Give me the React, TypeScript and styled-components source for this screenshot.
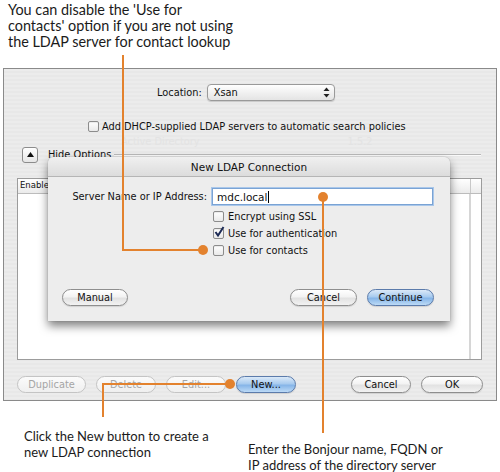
import styled, {createGlobalStyle, css} from 'styled-components';

const GlobalStyle = createGlobalStyle`
   html, body {
      margin: 0;
      padding: 0;
      background: #ffffff;
   }
`;

const ORANGE = '#e3822e';
const UI_FONT = `'DejaVu Sans', 'Liberation Sans', sans-serif`;

export default function App() {
   return (
      <>
         <GlobalStyle />
         <Page>
            <TopCaption>
               You can disable the 'Use for
               <br />
               contacts' option if you are not using
               <br />
               the LDAP server for contact lookup
            </TopCaption>

            <Window>
               <LocationRow>
                  <span>Location:</span>
                  <PopUp>
                     <span>Xsan</span>
                     <PopArrows>
                        <svg width='7' height='11' viewBox='0 0 7 11'>
                           <path d='M3.5 0.5 L6.5 4 L0.5 4 Z' fill='#222' />
                           <path d='M3.5 10.5 L6.5 7 L0.5 7 Z' fill='#222' />
                        </svg>
                     </PopArrows>
                  </PopUp>
               </LocationRow>

               <DhcpRow>
                  <CheckBox />
                  <span>Add DHCP-supplied LDAP servers to automatic search policies</span>
               </DhcpRow>

               <GhostRow>
                  <span>Active Directory</span>
                  <span>1.5.2</span>
               </GhostRow>

               <HideRow>
                  <Disclosure>
                     <svg width='7' height='5' viewBox='0 0 7 5'>
                        <path d='M3.5 0 L7 5 L0 5 Z' fill='#111' />
                     </svg>
                  </Disclosure>
                  <span>Hide Options</span>
                  <Separator />
               </HideRow>

               <Table>
                  <TableHead>
                     <HeadCell>Enable</HeadCell>
                     <HeadCell $grow />
                     <HeadCell $w={10} />
                  </TableHead>
                  <TableBody>
                     <BodyCol />
                     <BodyCol $w={10} />
                  </TableBody>
               </Table>

               <ButtonRow>
                  <PillButton $w={69} $disabled>Duplicate</PillButton>
                  <PillButton $w={60} $disabled>Delete</PillButton>
                  <PillButton $w={60} $disabled>Edit...</PillButton>
                  <PillButton $w={60} $blue>New...</PillButton>
                  <Spacer />
                  <PillButton $w={60}>Cancel</PillButton>
                  <PillButton $w={62}>OK</PillButton>
               </ButtonRow>

               <Sheet>
                  <SheetTitle>New LDAP Connection</SheetTitle>
                  <SheetBody>
                     <FieldRow>
                        <FieldLabel>Server Name or IP Address:</FieldLabel>
                        <TextField>
                           mdc.local
                           <Caret />
                        </TextField>
                     </FieldRow>
                     <Options>
                        <OptionRow>
                           <CheckBox />
                           <span>Encrypt using SSL</span>
                        </OptionRow>
                        <OptionRow>
                           <CheckBox $checked>
                              <svg width='12' height='12' viewBox='0 0 12 12'>
                                 <path
                                    d='M2.5 6 L5 9.5 L10.5 1'
                                    fill='none'
                                    stroke='#1c2a55'
                                    strokeWidth='2'
                                 />
                              </svg>
                           </CheckBox>
                           <span>Use for authentication</span>
                        </OptionRow>
                        <OptionRow>
                           <CheckBox />
                           <span>Use for contacts</span>
                        </OptionRow>
                     </Options>
                     <SheetButtons>
                        <PillButton $w={66}>Manual</PillButton>
                        <Spacer />
                        <PillButton $w={67}>Cancel</PillButton>
                        <PillButton $w={67} $blue>
                           Continue
                        </PillButton>
                     </SheetButtons>
                  </SheetBody>
               </Sheet>
            </Window>

            <BottomCaptions>
               <Caption $left={24}>
                  Click the New button to create a
                  <br />
                  new LDAP connection
               </Caption>
               <Caption $left={248} $top={13}>
                  Enter the Bonjour name, FQDN or
                  <br />
                  IP address of the directory server
               </Caption>
            </BottomCaptions>

            {/* callout lines */}
            <Callouts width='500' height='472' viewBox='0 0 500 472'>
               <g stroke={ORANGE} strokeWidth='2' fill='none'>
                  <path d='M123 55 V250 H203' />
                  <path d='M323 197 V433' />
                  <path d='M230 384 H103 V417' />
               </g>
               <g fill={ORANGE}>
                  <circle cx='203' cy='250' r='5' />
                  <circle cx='323' cy='197' r='5' />
                  <circle cx='230' cy='384' r='5' />
               </g>
            </Callouts>
         </Page>
      </>
   );
}

const Page = styled.div`
   position: relative;
   width: 500px;
   height: 472px;
   overflow: hidden;
   background: #ffffff;
`;

const TopCaption = styled.div`
   padding: 2px 0 0 8px;
   height: 48px;
   font-family: Lato, 'Open Sans', sans-serif;
   font-size: 14.4px;
   line-height: 16px;
   color: #1b1b1b;
`;

const Window = styled.div`
   position: relative;
   box-sizing: border-box;
   margin: 18px 0 0 3px;
   width: 494px;
   height: 333px;
   border: 1px solid #8a8a8a;
   background: repeating-linear-gradient(#ececec 0 2px, #e8e8e8 2px 4px);
   display: flex;
   flex-direction: column;
   font-family: ${UI_FONT};
   font-size: 9.8px;
   color: #111;
`;

const LocationRow = styled.div`
   display: flex;
   align-items: center;
   gap: 5px;
   margin: 15px 0 0 153px;
   height: 17px;
`;

const PopUp = styled.div`
   box-sizing: border-box;
   width: 128px;
   height: 17px;
   display: flex;
   align-items: center;
   justify-content: space-between;
   padding: 0 0 0 6px;
   border: 1px solid #9a9a9a;
   border-radius: 4px;
   background: linear-gradient(#ffffff, #f1f1f1 50%, #e4e4e4);
   box-shadow: 0 1px 1px rgba(0, 0, 0, 0.15);
`;

const PopArrows = styled.div`
   display: flex;
   align-items: center;
   justify-content: center;
   width: 14px;
   height: 100%;
`;

const DhcpRow = styled.div`
   display: flex;
   align-items: center;
   gap: 3px;
   margin: 19px 0 0 84px;
   height: 12px;
`;

const CheckBox = styled.div<{$checked?: boolean}>`
   position: relative;
   box-sizing: border-box;
   width: 11px;
   height: 11px;
   flex: none;
   border: 1px solid #8c8c8c;
   border-radius: 2px;
   background: linear-gradient(#ffffff, #e9e9e9);
   box-shadow: inset 0 1px 1px rgba(0, 0, 0, 0.08);

   svg {
      position: absolute;
      left: -1px;
      top: -3px;
   }
`;

const GhostRow = styled.div`
   display: flex;
   gap: 148px;
   margin: 4px 0 0 117px;
   height: 11px;
   color: #e3e3e3;
`;

const HideRow = styled.div`
   display: flex;
   align-items: center;
   margin: -1px 0 0 18px;
   height: 17px;
`;

const Disclosure = styled.div`
   box-sizing: border-box;
   width: 16px;
   height: 16px;
   margin-right: 10px;
   display: flex;
   align-items: center;
   justify-content: center;
   border: 1px solid #8c8c8c;
   border-radius: 3px;
   background: linear-gradient(#ffffff, #e6e6e6);
`;

const Separator = styled.div`
   flex: none;
   width: 367px;
   height: 1px;
   margin-left: 3px;
   background: #b9b9b9;
   border-bottom: 1px solid #fafafa;
`;

const Table = styled.div`
   box-sizing: border-box;
   margin: 15px 0 0 13px;
   width: 465px;
   height: 182px;
   border: 1px solid #9c9c9c;
   background: #ffffff;
   display: flex;
   flex-direction: column;
`;

const TableHead = styled.div`
   display: flex;
   height: 14px;
   border-bottom: 1px solid #bcbcbc;
   background: linear-gradient(#ffffff, #ebebeb);
`;

const HeadCell = styled.div<{$grow?: boolean; $w?: number}>`
   box-sizing: border-box;
   padding: 1px 0 0 2px;
   font-size: 8.5px;
   border-right: 1px solid #c8c8c8;
   ${({$grow, $w}) =>
      $grow
         ? css`flex: 1;`
         : $w
         ? css`width: ${$w}px; border-right: none;`
         : css`width: 38px;`}
`;

const TableBody = styled.div`
   flex: 1;
   display: flex;
   justify-content: flex-end;
`;

const BodyCol = styled.div<{$w?: number}>`
   width: ${({$w}) => $w ?? 0}px;
   border-left: 1px solid #d6d6d6;
`;

const ButtonRow = styled.div`
   display: flex;
   align-items: center;
   gap: 10px;
   margin: 16px 0 0 13px;
   width: 466px;
`;

const Spacer = styled.div`
   flex: 1;
`;

const PillButton = styled.div<{$w: number; $blue?: boolean; $disabled?: boolean}>`
   box-sizing: border-box;
   width: ${({$w}) => $w}px;
   height: 17px;
   display: flex;
   align-items: center;
   justify-content: center;
   border: 1px solid #8e8e8e;
   border-radius: 9px;
   background: linear-gradient(#ffffff, #f3f3f3 45%, #e2e2e2 55%, #f2f2f2);
   box-shadow: 0 1px 1px rgba(0, 0, 0, 0.12);
   color: #111;

   ${({$blue}) =>
      $blue &&
      css`
         border-color: #5b7bab;
         background: linear-gradient(#dbe9f8, #a8cbef 45%, #86b5e8 55%, #bcdaf6);
      `}

   ${({$disabled}) =>
      $disabled &&
      css`
         border-color: #c4c4c4;
         color: #a5a5a5;
         box-shadow: none;
         background: linear-gradient(#fbfbfb, #efefef);
      `}
`;

const Sheet = styled.div`
   position: absolute;
   left: 44px;
   top: 88px;
   width: 402px;
   height: 164px;
   display: flex;
   flex-direction: column;
   border-radius: 6px 6px 0 0;
   background: #ededed;
   box-shadow: 0 5px 10px rgba(0, 0, 0, 0.5), 0 0 1px rgba(0, 0, 0, 0.4);
`;

const SheetTitle = styled.div`
   height: 19px;
   display: flex;
   align-items: center;
   justify-content: center;
   font-size: 10.5px;
   border-radius: 6px 6px 0 0;
   border-bottom: 1px solid #b5b5b5;
   background: linear-gradient(#f0f0f0, #dcdcdc);
`;

const SheetBody = styled.div`
   flex: 1;
   display: flex;
   flex-direction: column;
   padding: 11px 16px 0 14px;
`;

const FieldRow = styled.div`
   display: flex;
   align-items: center;
   height: 17px;
`;

const FieldLabel = styled.div`
   width: 145px;
   text-align: right;
   margin-right: 5px;
`;

const TextField = styled.div`
   box-sizing: border-box;
   width: 221px;
   height: 17px;
   display: flex;
   align-items: center;
   padding-left: 4px;
   font-size: 10.5px;
   background: #ffffff;
   border: 1px solid #7aa3d4;
   box-shadow: 0 0 0 1px #a9c7ea;
`;

const Caret = styled.span`
   width: 1px;
   height: 12px;
   margin-left: 1px;
   background: #000;
`;

const Options = styled.div`
   display: flex;
   flex-direction: column;
   gap: 5px;
   margin: 5px 0 0 151px;
`;

const OptionRow = styled.div`
   display: flex;
   align-items: center;
   gap: 4px;
   height: 12px;
`;

const SheetButtons = styled.div`
   display: flex;
   gap: 10px;
   margin-top: 33px;
`;

const BottomCaptions = styled.div`
   position: relative;
   display: flex;
   height: 70px;
   margin-top: 27px;
   font-family: Lato, 'Open Sans', sans-serif;
   font-size: 13px;
   line-height: 16px;
   color: #1b1b1b;
`;

const Caption = styled.div<{$left: number; $top?: number}>`
   position: absolute;
   left: ${({$left}) => $left}px;
   top: ${({$top}) => $top ?? 0}px;
   white-space: nowrap;
`;

const Callouts = styled.svg`
   position: absolute;
   left: 0;
   top: 0;
   pointer-events: none;
`;
